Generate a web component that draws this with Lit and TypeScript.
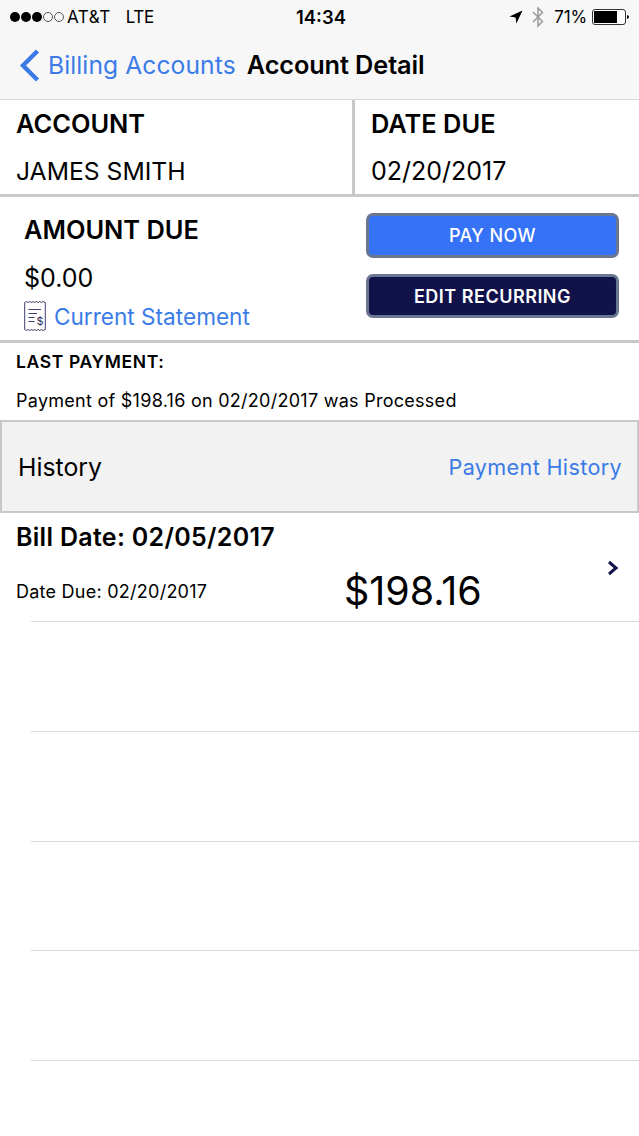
import { LitElement, html, css, svg } from "lit";
import { customElement } from "lit/decorators.js";

@customElement("app-root")
export class AppRoot extends LitElement {
  static styles = css`
    :host { display: block; width: 639px; height: 1136px; background: #fff; overflow: hidden;
      font-family: Inter, "Noto Sans", sans-serif; color: #000; }
    .top { height: 99px; background: #f7f7f8; border-bottom: 1px solid #d9d9d9; box-sizing: content-box; display: flex; flex-direction: column; }
    .status { height: 34px; display: flex; align-items: center; padding: 0 9px 0 10px; font-size: 17px; }
    .status .left, .status .right { flex: 1; display: flex; align-items: center; }
    .status .right { justify-content: flex-end; }
    .dots { display: flex; gap: 1px; margin-right: 3px; }
    .dot { width: 10px; height: 10px; border-radius: 50%; background: #000; box-sizing: border-box; }
    .dot.off { background: transparent; border: 1px solid #555; }
    .carrier { letter-spacing: 0.5px; }
    .lte { margin-left: 15px; letter-spacing: -0.3px; }
    .time { font-weight: 600; font-size: 18.4px; position: relative; left: 1px; }
    .pct { margin: 0 5px 0 10px; letter-spacing: -0.2px; }
    .nav { flex: 1; display: flex; align-items: center; padding: 0 0 3px 19px; }
    .back { color: #3b7be8; margin-left: 8px; letter-spacing: 0.1px; font-size: 24.6px; }
    .title { font-weight: 600; margin: 0 0 2px 11px; font-size: 25.3px; letter-spacing: -0.1px; }
    .acct { display: grid; grid-template-columns: 352px 1fr; height: 94px; border-bottom: 3px solid #c8c8c8; }
    .acct > div { padding: 9px 0 0 16px; display: flex; flex-direction: column; gap: 19px; }
    .acct > div + div { border-left: 3px solid #c8c8c8; }
    .h { font-weight: 600; font-size: 25.4px; line-height: 30px; }
    .v { font-size: 25px; line-height: 30px; }
    .acct .v { margin-top: -2px; }
    .acct .v.name { font-size: 24.7px; }
    .amount { height: 143px; border-bottom: 3px solid #c8c8c8; display: flex; justify-content: space-between; }
    .amt-l { padding: 18px 0 0 24px; display: flex; flex-direction: column; }
    .amt-l .v { margin-top: 18px; }
    .stmt { display: flex; align-items: center; gap: 8px; margin-top: 8px; color: #3b7be8; font-size: 22.6px; }
    .btns { padding: 16px 20px 0 0; display: flex; flex-direction: column; gap: 16px; }
    .btn { width: 253px; height: 45px; box-sizing: border-box; border: 3px solid #6b7690; border-radius: 7px; color: #fff;
      display: flex; align-items: center; justify-content: center; font-weight: 500; font-size: 18px; letter-spacing: 0.4px; }
    .pay { background: #3572f6; }
    .edit { background: #12124a; font-weight: 600; height: 44px; letter-spacing: 0.5px; }
    .last { height: 77px; padding: 8px 0 0 16px; box-sizing: border-box; }
    .last .lbl { font-size: 17.5px; font-weight: 600; letter-spacing: 0.65px; line-height: 22px; }
    .last .msg { font-size: 18px; line-height: 24px; margin-top: 16px; letter-spacing: 0.27px; }
    .hist { height: 93px; box-sizing: border-box; background: #f2f2f2; border: 2px solid #c8c8c8; display: flex; align-items: center; justify-content: space-between; padding: 0 15px 0 16px; }
    .hist .t { font-size: 24.8px; }
    .hist .l { color: #3b7be8; font-size: 21.6px; letter-spacing: 0.35px; }
    .row { height: 108px; position: relative; box-sizing: border-box; padding: 9px 0 0 16px; }
    .row .d { font-weight: 600; font-size: 25px; line-height: 30px; letter-spacing: 0.3px; }
    .bot { display: flex; align-items: center; margin-top: 16px; height: 46px; }
    .bot .dd { font-size: 18px; width: 328px; letter-spacing: 0.25px; }
    .bot .a { font-size: 39.4px; }
    .chev { position: absolute; right: 20px; top: 47px; }
    .rule { margin-left: 31px; height: 1px; background: #d9d9d9; }
    .empty { height: 108.75px; }
  `;

  private receipt() {
    return svg`<svg width="22" height="30" viewBox="0 0 22 30" fill="none" stroke="#2a2a5e" stroke-width=".9">
      <path d="M.7 1.5 L2.3 .5 L4 1.5 L5.7 .5 L7.3 1.5 L9 .5 L10.7 1.5 L12.3 .5 L14 1.5 L15.7 .5 L17.3 1.5 L19 .5 L21.3 1.5 V28.5 L19 29.5 L17.3 28.5 L15.7 29.5 L14 28.5 L12.3 29.5 L10.7 28.5 L9 29.5 L7.3 28.5 L5.7 29.5 L4 28.5 L2.3 29.5 L.7 28.5 Z"/>
      <path d="M4.5 8.5H17M4.5 12.5H13M4.5 16.5H10.5M4.5 20.5H10.5"/>
      <text x="12.5" y="23.5" font-size="11" fill="#2a2a5e" stroke="none" font-family="Inter">$</text>
    </svg>`;
  }

  render() {
    return html`
      <div class="top">
        <div class="status">
          <div class="left">
            <div class="dots"><span class="dot"></span><span class="dot"></span><span class="dot"></span><span class="dot off"></span><span class="dot off"></span></div>
            <span class="carrier">AT&amp;T</span><span class="lte">LTE</span>
          </div>
          <span class="time">14:34</span>
          <div class="right">
            <svg width="14" height="14" viewBox="0 0 14 14"><path d="M13.5 .5 L.5 6.6 L6.6 7.4 L7.4 13.5 Z" fill="#000"/></svg>
            <svg style="margin-left:9px" width="12" height="22" viewBox="0 0 12 22" fill="none" stroke="#9a9a9a" stroke-width="1.5"><path d="M1 6 L10.5 15.5 L6 20 V2 L10.5 6.5 L1 16"/></svg>
            <span class="pct">71%</span>
            <svg width="38" height="16" viewBox="0 0 38 16"><rect x=".5" y=".5" width="33" height="15" rx="2.5" fill="#fff" stroke="#333"/><rect x="2" y="2" width="23" height="12" fill="#000"/><path d="M35 6 q2 .5 2 2 t-2 2z" fill="#000"/></svg>
          </div>
        </div>
        <div class="nav">
          <svg width="21" height="33" viewBox="0 0 21 33" fill="none" stroke="#3b7be8" stroke-width="4.4"><path d="M18.5 2 L4 16.5 L18.5 31"/></svg>
          <span class="back">Billing Accounts</span>
          <span class="title">Account Detail</span>
        </div>
      </div>
      <div class="acct">
        <div><span class="h">ACCOUNT</span><span class="v name">JAMES SMITH</span></div>
        <div><span class="h">DATE DUE</span><span class="v">02/20/2017</span></div>
      </div>
      <div class="amount">
        <div class="amt-l">
          <span class="h">AMOUNT DUE</span>
          <span class="v">$0.00</span>
          <div class="stmt">${this.receipt()}<span>Current Statement</span></div>
        </div>
        <div class="btns">
          <div class="btn pay">PAY NOW</div>
          <div class="btn edit">EDIT RECURRING</div>
        </div>
      </div>
      <div class="last">
        <div class="lbl">LAST PAYMENT:</div>
        <div class="msg">Payment of $198.16 on 02/20/2017 was Processed</div>
      </div>
      <div class="hist"><span class="t">History</span><span class="l">Payment History</span></div>
      <div class="row">
        <div class="d">Bill Date: 02/05/2017</div>
        <div class="bot"><span class="dd">Date Due: 02/20/2017</span><span class="a">$198.16</span></div>
        <svg class="chev" width="12" height="16" viewBox="0 0 12 16" fill="none" stroke="#14144c" stroke-width="3"><path d="M2 2 L9 8 L2 14"/></svg>
      </div>
      <div class="rule"></div><div class="empty"></div>
      <div class="rule"></div><div class="empty"></div>
      <div class="rule"></div><div class="empty"></div>
      <div class="rule"></div><div class="empty"></div>
      <div class="rule"></div>
    `;
  }
}
